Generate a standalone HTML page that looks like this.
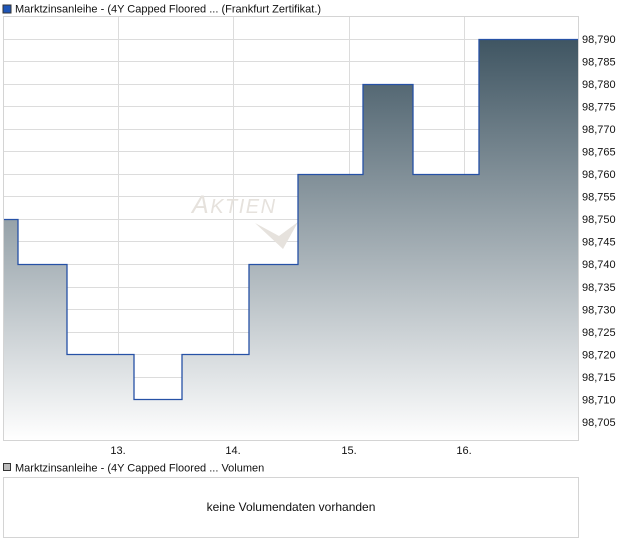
<!DOCTYPE html>
<html><head><style>
body{margin:0;background:#fff;width:620px;height:546px;overflow:hidden;font-family:"Liberation Sans",Arial,sans-serif;}
</style></head><body>
<svg width="620" height="546" xmlns="http://www.w3.org/2000/svg" font-family="Liberation Sans, Arial, sans-serif">
<defs>
<linearGradient id="g" x1="0" y1="39" x2="0" y2="440" gradientUnits="userSpaceOnUse">
<stop offset="0" stop-color="#3f5562"/>
<stop offset="1" stop-color="#ffffff"/>
</linearGradient>
</defs>
<rect x="3" y="5" width="8" height="8" fill="#1f56b8" stroke="#333" stroke-width="1"/>
<text x="15" y="12.5" font-size="11" fill="#111">Marktzinsanleihe - (4Y Capped Floored ... (Frankfurt Zertifikat.)</text>
<g stroke="#dcdcdc" stroke-width="1">
<line x1="3" y1="39.5" x2="578" y2="39.5"/><line x1="3" y1="61.5" x2="578" y2="61.5"/><line x1="3" y1="84.5" x2="578" y2="84.5"/><line x1="3" y1="106.5" x2="578" y2="106.5"/><line x1="3" y1="129.5" x2="578" y2="129.5"/><line x1="3" y1="151.5" x2="578" y2="151.5"/><line x1="3" y1="174.5" x2="578" y2="174.5"/><line x1="3" y1="196.5" x2="578" y2="196.5"/><line x1="3" y1="219.5" x2="578" y2="219.5"/><line x1="3" y1="241.5" x2="578" y2="241.5"/><line x1="3" y1="264.5" x2="578" y2="264.5"/><line x1="3" y1="287.5" x2="578" y2="287.5"/><line x1="3" y1="309.5" x2="578" y2="309.5"/><line x1="3" y1="332.5" x2="578" y2="332.5"/><line x1="3" y1="354.5" x2="578" y2="354.5"/><line x1="3" y1="377.5" x2="578" y2="377.5"/><line x1="3" y1="399.5" x2="578" y2="399.5"/><line x1="3" y1="422.5" x2="578" y2="422.5"/>
<line x1="118.5" y1="16" x2="118.5" y2="440"/><line x1="233.5" y1="16" x2="233.5" y2="440"/><line x1="349.5" y1="16" x2="349.5" y2="440"/><line x1="464.5" y1="16" x2="464.5" y2="440"/>
</g>
<text x="192" y="213" font-size="25" font-style="italic" fill="#e6e2dd" letter-spacing="1.5">A<tspan font-size="20">KTIEN</tspan></text>
<path d="M255 223 L279 236 L298 222 L283 249 Z" fill="#e6e2dd"/>
<path d="M3.5 219.5 H18 V264.5 H67 V354.5 H134 V399.5 H182 V354.5 H249 V264.5 H298 V174.5 H363 V84.5 H413 V174.5 H479 V39.5 H578 V440 H3.5 Z" fill="url(#g)"/>
<path d="M3.5 219.5 H18 V264.5 H67 V354.5 H134 V399.5 H182 V354.5 H249 V264.5 H298 V174.5 H363 V84.5 H413 V174.5 H479 V39.5 H578" fill="none" stroke="#2651a6" stroke-width="1.3"/>
<rect x="3.5" y="16.5" width="575" height="424" fill="none" stroke="#d4d4d4"/>
<g font-size="11" fill="#111">
<text x="582" y="43">98,790</text><text x="582" y="65.5">98,785</text><text x="582" y="88">98,780</text><text x="582" y="110.5">98,775</text><text x="582" y="133">98,770</text><text x="582" y="155.5">98,765</text><text x="582" y="178">98,760</text><text x="582" y="200.5">98,755</text><text x="582" y="223">98,750</text><text x="582" y="245.5">98,745</text><text x="582" y="268">98,740</text><text x="582" y="291">98,735</text><text x="582" y="313.5">98,730</text><text x="582" y="336">98,725</text><text x="582" y="358.5">98,720</text><text x="582" y="381">98,715</text><text x="582" y="403.5">98,710</text><text x="582" y="426">98,705</text>
<text x="118" y="454" text-anchor="middle">13.</text><text x="233" y="454" text-anchor="middle">14.</text><text x="349" y="454" text-anchor="middle">15.</text><text x="464" y="454" text-anchor="middle">16.</text>
<rect x="3.5" y="463.5" width="7" height="7" fill="#bbb" stroke="#333"/>
<text x="15" y="471.5">Marktzinsanleihe - (4Y Capped Floored ... Volumen</text>
<text x="291" y="511" text-anchor="middle" font-size="12">keine Volumendaten vorhanden</text>
</g>
<rect x="3.5" y="477.5" width="575" height="60" fill="none" stroke="#d4d4d4"/>
</svg>
</body></html>
